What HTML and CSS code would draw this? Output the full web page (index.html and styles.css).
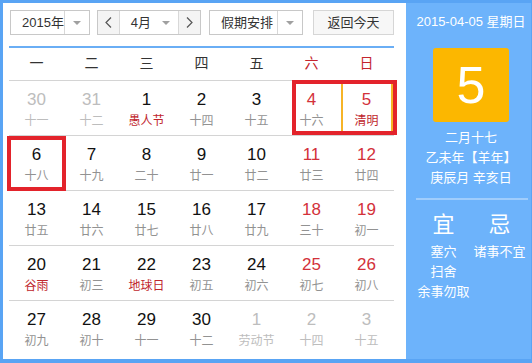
FILE: index.html
```html
<!doctype html>
<html>
<head>
	<title>万年历</title>
	<link rel="stylesheet" href="styles.css">
</head>
<body>
	<div class="calendar">
		<div class="main">
			<div class="toolbar">
				<div class="select year">
					<span class="label">2015年</span>
					<span class="drop"><i class="caret"></i></span>
				</div>
				<div class="select month">
					<span class="nav">
						<svg width="7" height="11" viewBox="0 0 7 11"><polyline points="6,0.5 1,5.5 6,10.5" fill="none" stroke="#555" stroke-width="1.2"/></svg>
					</span>
					<span class="label">4月<i class="caret"></i></span>
					<span class="nav">
						<svg width="7" height="11" viewBox="0 0 7 11"><polyline points="1,0.5 6,5.5 1,10.5" fill="none" stroke="#555" stroke-width="1.2"/></svg>
					</span>
				</div>
				<div class="select holiday">
					<span class="label">假期安排</span>
					<span class="drop"><i class="caret"></i></span>
				</div>
				<div class="btn-today">返回今天</div>
			</div>

			<div class="week">
				<span>一</span><span>二</span><span>三</span><span>四</span><span>五</span>
				<span class="weekend">六</span><span class="weekend">日</span>
			</div>

			<div class="days">
				<div class="day other"><b>30</b><small>十一</small></div>
				<div class="day other"><b>31</b><small>十二</small></div>
				<div class="day fest"><b>1</b><small>愚人节</small></div>
				<div class="day"><b>2</b><small>十四</small></div>
				<div class="day"><b>3</b><small>十五</small></div>
				<div class="day weekend"><b>4</b><small>十六</small><span class="rest rest-pair"></span></div>
				<div class="day weekend fest"><b>5</b><small>清明</small><span class="today"></span></div>

				<div class="day"><b>6</b><small>十八</small><span class="rest rest-one"></span></div>
				<div class="day"><b>7</b><small>十九</small></div>
				<div class="day"><b>8</b><small>二十</small></div>
				<div class="day"><b>9</b><small>廿一</small></div>
				<div class="day"><b>10</b><small>廿二</small></div>
				<div class="day weekend"><b>11</b><small>廿三</small></div>
				<div class="day weekend"><b>12</b><small>廿四</small></div>

				<div class="day"><b>13</b><small>廿五</small></div>
				<div class="day"><b>14</b><small>廿六</small></div>
				<div class="day"><b>15</b><small>廿七</small></div>
				<div class="day"><b>16</b><small>廿八</small></div>
				<div class="day"><b>17</b><small>廿九</small></div>
				<div class="day weekend"><b>18</b><small>三十</small></div>
				<div class="day weekend"><b>19</b><small>初一</small></div>

				<div class="day fest"><b>20</b><small>谷雨</small></div>
				<div class="day"><b>21</b><small>初三</small></div>
				<div class="day fest"><b>22</b><small>地球日</small></div>
				<div class="day"><b>23</b><small>初五</small></div>
				<div class="day"><b>24</b><small>初六</small></div>
				<div class="day weekend"><b>25</b><small>初七</small></div>
				<div class="day weekend"><b>26</b><small>初八</small></div>

				<div class="day"><b>27</b><small>初九</small></div>
				<div class="day"><b>28</b><small>初十</small></div>
				<div class="day"><b>29</b><small>十一</small></div>
				<div class="day"><b>30</b><small>十二</small></div>
				<div class="day other"><b>1</b><small>劳动节</small></div>
				<div class="day other"><b>2</b><small>十四</small></div>
				<div class="day other"><b>3</b><small>十五</small></div>
			</div>
		</div>

		<div class="side">
			<p class="date">2015-04-05 星期日</p>
			<div class="big-day">5</div>
			<div class="lunar">
				<p>二月十七</p>
				<p>乙未年【羊年】</p>
				<p>庚辰月 辛亥日</p>
			</div>
			<div class="almanac">
				<div class="col">
					<p class="title">宜</p>
					<p>塞穴</p>
					<p>扫舍</p>
					<p>余事勿取</p>
				</div>
				<div class="col">
					<p class="title">忌</p>
					<p>诸事不宜</p>
				</div>
			</div>
		</div>
	</div>
</body>
</html>
```

FILE: styles.css
```css
body
{
	margin:0;
	font-family:"Liberation Sans","Noto Sans CJK SC",sans-serif;
}
p
{
	margin:0;
}
.calendar
{
	display:flex;
	width:532px;
	height:363px;
	box-sizing:border-box;
	padding:3px 3px 4px 3px;
	background-color:#59a4f4;
}
.main
{
	width:403px;
	box-sizing:border-box;
	padding:7px 12px 0 6px;
	background-color:#fff;
}
.toolbar
{
	display:flex;
	padding-left:1px;
	height:25px;
	font-size:13px;
	color:#333;
}
.select
{
	display:flex;
	box-sizing:border-box;
	height:25px;
	border:1px solid #c8c8c8;
	background-color:#fff;
}
.select .label
{
	position:relative;
	line-height:23px;
}
.drop
{
	display:flex;
	align-items:center;
	justify-content:center;
	width:24px;
	border-left:1px solid #d8d8d8;
}
.caret
{
	display:inline-block;
	width:0;
	height:0;
	border-left:4px solid transparent;
	border-right:4px solid transparent;
	border-top:4px solid #a0a0a0;
}
.year
{
	width:80px;
}
.year .label
{
	width:43px;
	padding-left:11px;
}
.month
{
	width:104px;
	margin-left:7px;
}
.month .label
{
	width:48px;
	padding-left:11px;
}
.month .label .caret
{
	position:absolute;
	right:8px;
	top:10px;
}
.nav
{
	display:flex;
	align-items:center;
	justify-content:center;
	width:21px;
	background-color:#f4f4f4;
}
.nav:first-child
{
	border-right:1px solid #d8d8d8;
}
.nav:last-child
{
	border-left:1px solid #d8d8d8;
}
.holiday
{
	width:94px;
	margin-left:8px;
}
.holiday .label
{
	width:57px;
	padding-left:11px;
}
.btn-today
{
	box-sizing:border-box;
	width:81px;
	margin-left:10px;
	border:1px solid #d6d6d6;
	background-color:#f7f7f7;
	text-align:center;
	line-height:23px;
}
.week
{
	display:grid;
	grid-template-columns:repeat(7,55px);
	margin-top:11px;
	border-top:2px solid #6aaef5;
	height:32px;
	line-height:31px;
	font-size:14px;
	color:#333;
	text-align:center;
}
.week .weekend
{
	color:#c4262e;
}
.days
{
	display:grid;
	grid-template-columns:repeat(7,55px);
	grid-auto-rows:55px;
}
.day
{
	position:relative;
	box-sizing:border-box;
	border-top:1px solid #d4d4d4;
	padding-top:8px;
	text-align:center;
}
.day b
{
	display:block;
	font-weight:normal;
	font-size:17px;
	line-height:22px;
	color:#111;
}
.day small
{
	display:block;
	margin-top:3px;
	font-size:12px;
	line-height:14px;
	color:#929292;
}
.day.weekend b
{
	color:#d3313a;
}
.day.fest small
{
	color:#c0262d;
}
.day.other b,
.day.other small
{
	color:#bdbdbd;
}
.rest
{
	position:absolute;
	z-index:2;
	box-sizing:border-box;
	border:4px solid #e3232b;
}
.rest-pair
{
	left:8px;
	top:-1px;
	width:105px;
	height:55px;
}
.rest-one
{
	left:-2px;
	top:0;
	width:59px;
	height:55px;
}
.today
{
	position:absolute;
	z-index:1;
	left:2px;
	right:1px;
	top:-1px;
	bottom:0;
	border:2px solid #f6b427;
}
.side
{
	flex:1;
	padding-top:9px;
	background-color:#6db3fb;
	color:#fff;
}
.date
{
	text-align:center;
	font-size:13px;
	line-height:20px;
	padding-left:5px;
}
.big-day
{
	width:76px;
	height:74px;
	margin:16px 0 0 27px;
	border-radius:3px;
	background-color:#fcb700;
	text-align:center;
	line-height:74px;
	font-size:52px;
}
.lunar
{
	margin-top:6px;
	padding-left:5px;
	text-align:center;
	font-size:13px;
	line-height:20px;
}
.almanac
{
	display:grid;
	grid-template-columns:56px 56px;
	margin:10px 3px 0 10px;
	padding-top:12px;
	border-top:2px solid rgba(255,255,255,0.35);
	font-size:13px;
	line-height:20px;
	text-align:center;
}
.almanac .col
{
	margin-left:-1px;
}
.almanac .title
{
	font-size:22px;
	line-height:26px;
	margin-bottom:4px;
}
```
